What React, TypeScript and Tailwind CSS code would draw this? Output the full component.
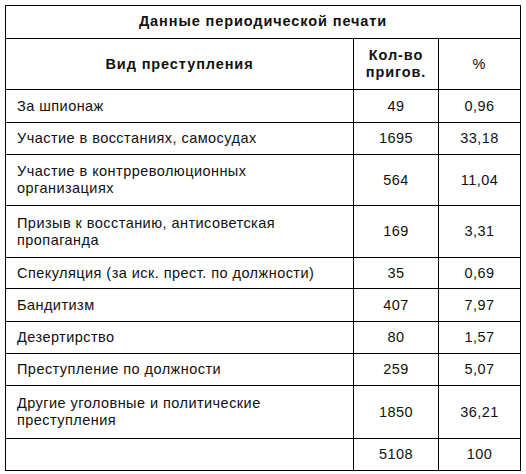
const rows: { name: string; count: string; pct: string; h: string }[] = [
  { name: "За шпионаж", count: "49", pct: "0,96", h: "h-[33px]" },
  { name: "Участие в восстаниях, самосудах", count: "1695", pct: "33,18", h: "h-[32px]" },
  { name: "Участие в контрреволюционных\nорганизациях", count: "564", pct: "11,04", h: "h-[51px]" },
  { name: "Призыв к восстанию, антисоветская\nпропаганда", count: "169", pct: "3,31", h: "h-[52px]" },
  { name: "Спекуляция (за иск. прест. по должности)", count: "35", pct: "0,69", h: "h-[31px]" },
  { name: "Бандитизм", count: "407", pct: "7,97", h: "h-[33px]" },
  { name: "Дезертирство", count: "80", pct: "1,57", h: "h-[32px]" },
  { name: "Преступление по должности", count: "259", pct: "5,07", h: "h-[32px]" },
  { name: "Другие уголовные и политические\nпреступления", count: "1850", pct: "36,21", h: "h-[53px]" },
  { name: "", count: "5108", pct: "100", h: "h-[32px]" },
];

export default function App() {
  return (
    <div className="min-h-[474px] w-[526px] bg-white pl-[5px] pt-[5px] font-['Liberation_Sans',Arial,sans-serif] text-[14.5px] leading-[17px] tracking-[0.45px] text-[#111]">
      <div className="w-[516px] border-l border-t border-black">
        <div className="flex h-[33px] items-center justify-center border-b border-r border-black pb-[1px] font-bold tracking-[0.9px]">
          Данные периодической печати
        </div>

        <div className="flex h-[51px] font-bold tracking-[0.9px]">
          <div className="flex w-[348px] items-center justify-center border-b border-r border-black">
            Вид преступления
          </div>
          <div className="flex w-[85px] items-center justify-center border-b border-r border-black text-center">
            Кол-во
            <br />
            пригов.
          </div>
          <div className="flex w-[82px] items-center justify-center border-b border-r border-black font-normal">
            %
          </div>
        </div>

        {rows.map((r, i) => (
          <div key={i} className={`flex ${r.h}`}>
            <div className="flex w-[348px] items-center whitespace-pre-line border-b border-r border-black pl-[11px]">
              {r.name}
            </div>
            <div className="flex w-[85px] items-center justify-center border-b border-r border-black">
              {r.count}
            </div>
            <div className="flex w-[82px] items-center justify-center border-b border-r border-black">
              {r.pct}
            </div>
          </div>
        ))}
      </div>
    </div>
  );
}
